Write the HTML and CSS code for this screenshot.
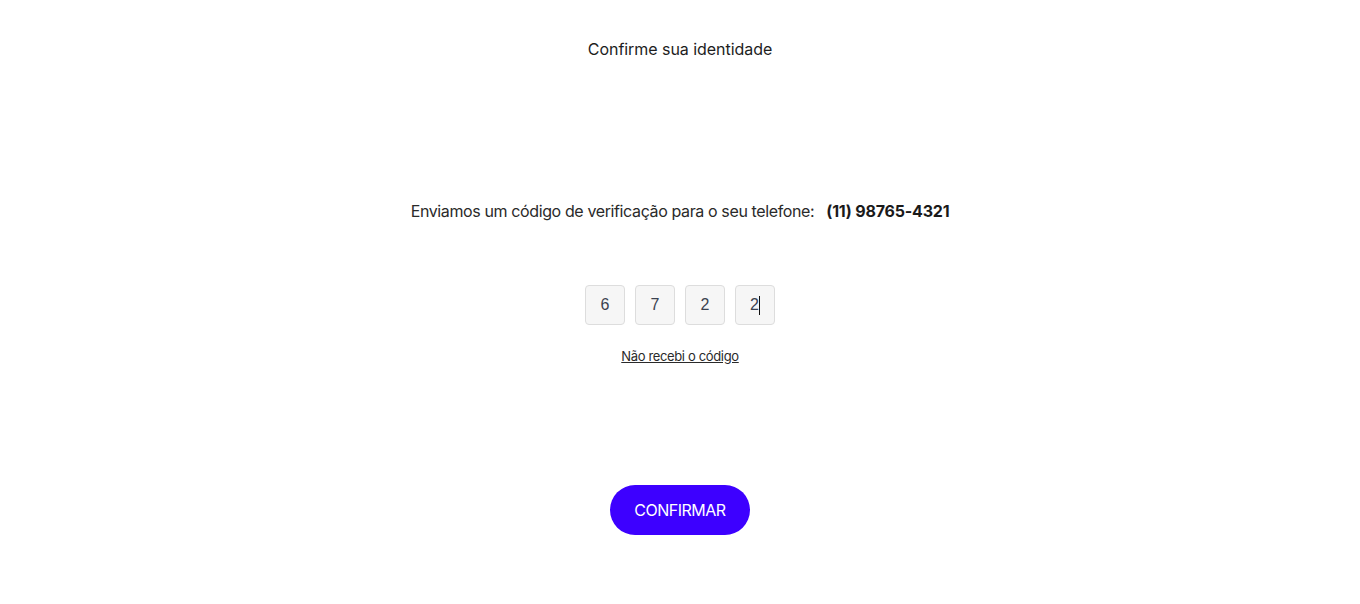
FILE: index.html
```html
<!DOCTYPE html>
<html lang="pt-BR">
<head>
<meta charset="utf-8">
<link rel="stylesheet" href="styles.css">
<title>Confirme sua identidade</title>
</head>
<body>
<main class="page">
  <h1 class="title">Confirme sua identidade</h1>
  <p class="info">Enviamos um código de verificação para o seu telefone: <strong class="phone">(11) 98765-4321</strong></p>
  <div class="code">
    <input class="digit" type="text" maxlength="1" value="6">
    <input class="digit" type="text" maxlength="1" value="7">
    <input class="digit" type="text" maxlength="1" value="2">
    <div class="digit digit-active">2<span class="caret"></span></div>
  </div>
  <a class="resend" href="#">Não recebi o código</a>
  <button class="confirm" type="button">CONFIRMAR</button>
</main>
</body>
</html>
```
FILE: styles.css
```css
* { box-sizing: border-box; }
html, body { margin: 0; padding: 0; background: #fff; }
body {
  font-family: Inter, "Noto Sans", sans-serif;
  color: #1f1f1f;
}
.page {
  display: flex;
  flex-direction: column;
  align-items: center;
  padding-top: 39px;
}
.title {
  margin: 0;
  font-size: 16px;
  font-weight: 400;
  line-height: 20px;
  color: #1d1d1d;
  letter-spacing: -0.05px;
}
.info {
  margin: 142px 0 0;
  font-size: 16px;
  line-height: 20px;
  color: #2a2a2a;
  letter-spacing: -0.38px;
}
.phone {
  font-weight: 700;
  margin-left: 8px;
  color: #1a1a1a;
  letter-spacing: -0.2px;
}
.code {
  display: flex;
  gap: 10px;
  margin-top: 64px;
}
.digit {
  width: 40px;
  height: 40px;
  border: 1px solid #dddddd;
  border-radius: 4px;
  background: #f6f6f6;
  font-family: "Liberation Sans", Arial, sans-serif;
  font-size: 16px;
  color: #3b4250;
  text-align: center;
  padding: 0;
  outline: none;
  margin: 0;
}
.digit-active {
  display: flex;
  align-items: center;
  justify-content: center;
}
.caret {
  display: inline-block;
  width: 1px;
  height: 19px;
  background: #111;
}
.resend {
  margin-top: 23px;
  font-size: 13px;
  line-height: 16px;
  color: #2a2a2a;
  text-decoration: underline;
  letter-spacing: -0.35px;
}
.confirm {
  margin-top: 121px;
  width: 140px;
  height: 50px;
  border: none;
  border-radius: 25px;
  background: #3d00ff;
  color: #fff;
  font-family: Inter, "Noto Sans", sans-serif;
  font-size: 16px;
  font-weight: 400;
  letter-spacing: -0.5px;
  cursor: pointer;
}
```
